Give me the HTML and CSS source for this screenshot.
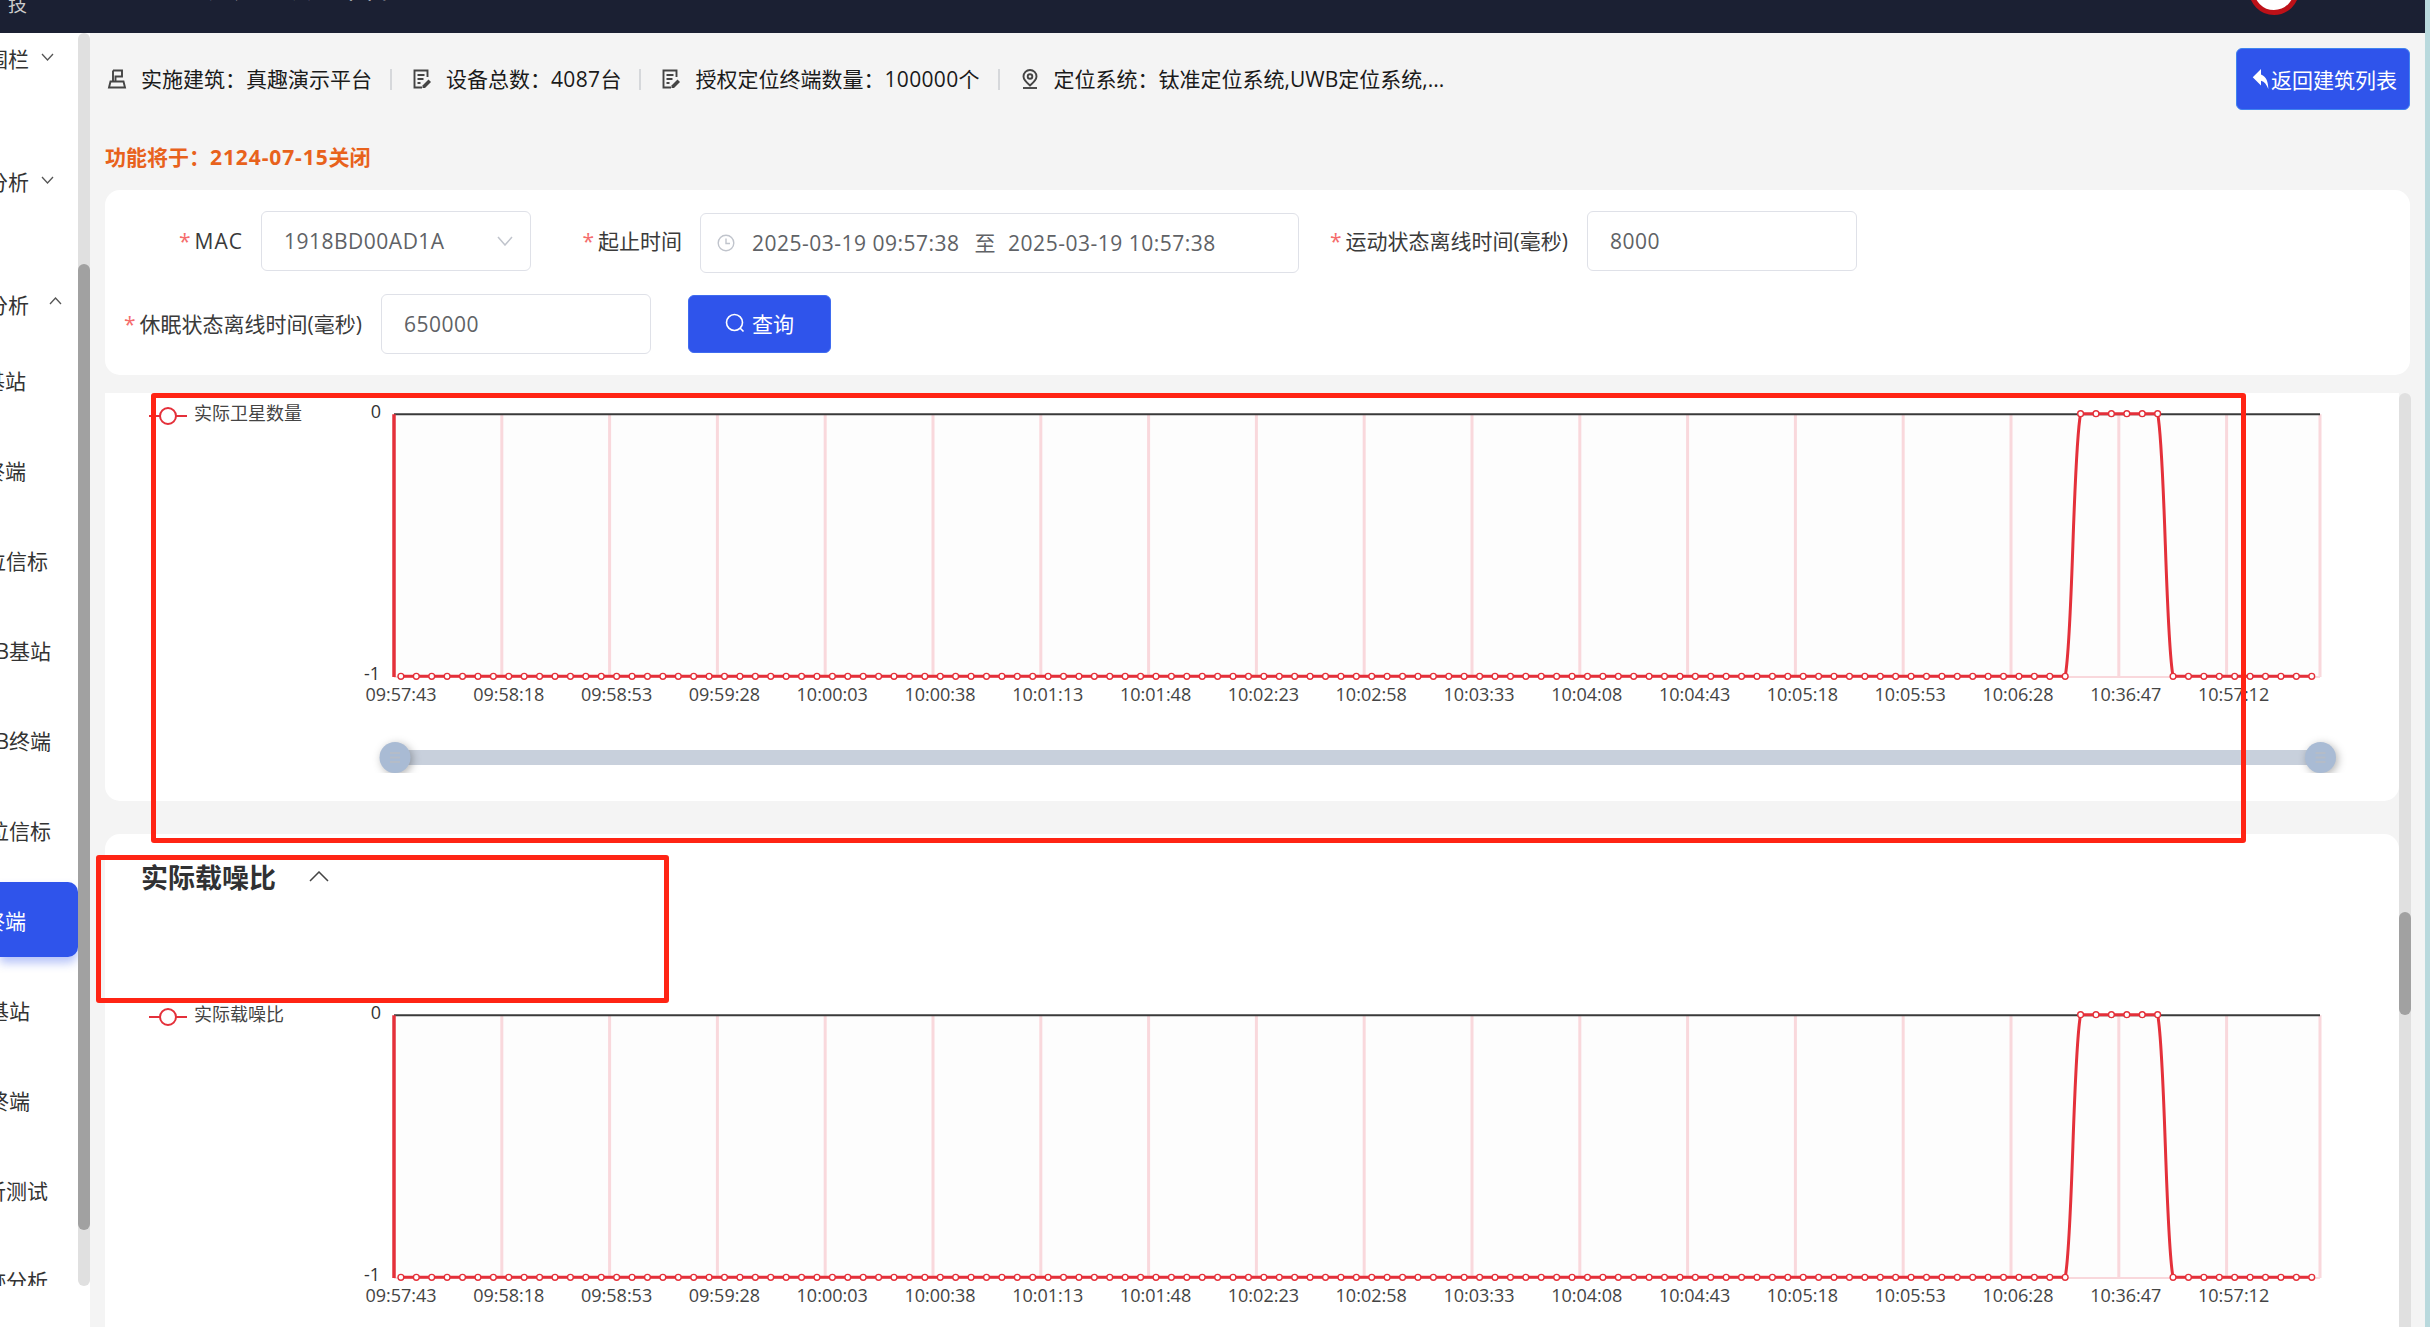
FILE: index.html
```html
<!DOCTYPE html>
<html lang="zh-CN">
<head>
    <meta charset="UTF-8">
    <meta name="viewport" content="width=device-width, initial-scale=1.0">
    <title>实际卫星数量</title>
    <link rel="stylesheet" href="styles.css">
</head>
<body>
    <div class="app">
        <header class="topbar">
            <div class="logo-text">技</div>
            <div class="sys-name">真趣</div>
            <div class="sys-title">位置服务定位演示平台</div>
            <div class="user-name">您好，管理员</div>
            <div class="avatar"></div>
        </header>

        <div class="layout">
            <aside class="sidebar">
                <div class="menu">
                    <div class="menu-scroll">
                        <div class="menu-group">
                            <span>电子围栏</span>
                            <svg class="chev" viewBox="0 0 13 8"><path d="M1 1l5.5 6L12 1"/></svg>
                        </div>
                        <div class="menu-group">
                            <span>数据分析</span>
                            <svg class="chev" viewBox="0 0 13 8"><path d="M1 1l5.5 6L12 1"/></svg>
                        </div>
                        <div class="menu-group open">
                            <span>定位分析</span>
                            <svg class="chev" viewBox="0 0 13 8"><path d="M1 7l5.5-6L12 7"/></svg>
                        </div>
                        <div class="menu-item end-a">定位基站</div>
                        <div class="menu-item end-a">定位终端</div>
                        <div class="menu-item end-b">定位信标</div>
                        <div class="menu-item end-c">UWB基站</div>
                        <div class="menu-item end-c">UWB终端</div>
                        <div class="menu-item end-c">定位信标</div>
                        <div class="menu-item end-a active">定位终端</div>
                        <div class="menu-item end-d">定位基站</div>
                        <div class="menu-item end-d">定位终端</div>
                        <div class="menu-item end-b">分析测试</div>
                        <div class="menu-item end-b">轨迹分析</div>
                    </div>
                </div>
                <div class="side-track"><div class="side-thumb"></div></div>
            </aside>

            <main class="main">
                <div class="info-bar">
                    <div class="info-list">
                        <div class="info-item">
                            <svg class="info-icon" viewBox="0 0 20 20"><path d="M6 1.5h9v6H8.5V12M6 1.5V12M3.5 12.5h13l1.5 6H2z"/></svg>
                            <span>实施建筑：真趣演示平台</span>
                        </div>
                        <div class="info-item">
                            <svg class="info-icon" viewBox="0 0 20 20"><use href="#icon-doc"/></svg>
                            <span>设备总数：<span class="num">4087</span>台</span>
                        </div>
                        <div class="info-item">
                            <svg class="info-icon" viewBox="0 0 20 20"><use href="#icon-doc"/></svg>
                            <span>授权定位终端数量：<span class="num">100000</span>个</span>
                        </div>
                        <div class="info-item">
                            <svg class="info-icon" viewBox="0 0 20 20"><path d="M10 1a6.5 6.5 0 0 0-6.500 6.500C3.500 11 10 16.500 10 16.500S16.500 11 16.500 7.500A6.500 6.500 0 0 0 10 1z"/><circle cx="10" cy="7.500" r="2.300"/><path d="M3 19h14"/></svg>
                            <span>定位系统：钛准定位系统,UWB定位系统,...</span>
                        </div>
                    </div>
                    <button class="back-btn">
                        <svg class="back-icon" viewBox="0 0 18 24"><path d="M0 10L9 1v6c6 2 8 9 8 16-2-5-4-8-8-9v5z"/></svg>返回建筑列表
                    </button>
                </div>

                <div class="notice">功能将于：<span class="notice-date">2124-07-15</span>关闭</div>

                <div class="search-card">
                    <div class="form-row">
                        <label class="form-label label-mac"><i>*</i><span class="mac-text">MAC</span></label>
                        <div class="field field-select">
                            <span>1918BD00AD1A</span>
                            <svg class="select-arrow" viewBox="0 0 16 10"><path d="M1 1l7 8 7-8"/></svg>
                        </div>
                        <label class="form-label label-time"><i>*</i>起止时间</label>
                        <div class="field field-date">
                            <svg class="clock" viewBox="0 0 18 18"><circle cx="9" cy="9" r="7.800"/><path d="M9 4.500V9.500h4"/></svg>
                            <span class="date-val">2025-03-19 09:57:38</span>
                            <span class="date-sep">至</span>
                            <span>2025-03-19 10:57:38</span>
                        </div>
                        <label class="form-label label-run"><i>*</i>运动状态离线时间(毫秒)</label>
                        <div class="field">8000</div>
                    </div>
                    <div class="form-row second">
                        <label class="form-label label-sleep"><i>*</i>休眠状态离线时间(毫秒)</label>
                        <div class="field">650000</div>
                        <button class="query-btn">
                            <svg class="query-icon" viewBox="0 0 20 20"><circle cx="9.500" cy="9.500" r="8"/><path d="M15 15l3.500 3.500"/></svg>查询
                        </button>
                    </div>
                </div>

                <div class="chart-area">
                    <div class="charts">
                        <section class="chart-card first">
                            <svg class="chart" id="chartSat" width="2294" height="408"></svg>
                        </section>
                        <section class="chart-card second">
                            <div class="card-head">
                                <h3>实际载噪比</h3>
                                <svg class="head-chev" viewBox="0 0 20 11"><path d="M1 10l9-9 9 9"/></svg>
                            </div>
                            <svg class="chart" id="chartCnr" width="2294" height="340"></svg>
                        </section>
                    </div>
                    <div class="main-track"><div class="main-thumb"></div></div>
                </div>
            </main>
        </div>

        <!-- red marks drawn over the screenshot -->
        <div class="mark mark-chart"></div>
        <div class="mark mark-title"></div>
    </div>

    <svg width="0" height="0" class="defs">
        <symbol id="icon-doc" viewBox="0 0 20 20">
            <path d="M15.500 8V1.500H2.500v17h7.500M5.500 6h7M5.500 10h6M5.500 14h3"/>
            <path class="solid" d="M16.500 10.500l2.500 2.500-6 6h-2.500v-2.500z"/>
        </symbol>
    </svg>

    <script>
        const times = ['09:57:43', '09:58:18', '09:58:53', '09:59:28', '10:00:03', '10:00:38', '10:01:13', '10:01:48', '10:02:23',
            '10:02:58', '10:03:33', '10:04:08', '10:04:43', '10:05:18', '10:05:53', '10:06:28', '10:36:47', '10:57:12'];

        const left = 289, right = 2215, top0 = 21.3, bottom = 284;
        const step = 107.8, pointStep = 15.41, pointCount = 125;
        const hiY = 20.7, loY = 283.3;

        function pointX(i) { return 295.9 + pointStep * i; }
        function isHigh(i) { return i >= 109 && i <= 114; }

        function buildLine() {
            let d = `M${pointX(0)} ${loY}`;
            for (let i = 1; i < pointCount; i++) {
                const x0 = pointX(i - 1), x1 = pointX(i);
                const y0 = isHigh(i - 1) ? hiY : loY, y1 = isHigh(i) ? hiY : loY;
                if (y0 === y1) {
                    d += `L${x1} ${y1}`;
                } else {
                    const dx = x1 - x0, dy = y1 - y0;
                    d += `C${x0 + dx * 0.5} ${y0 + dy * 0.15} ${x0 + dx * 0.5} ${y0 + dy * 0.85} ${x1} ${y1}`;
                }
            }
            return d;
        }

        function handle(cx) {
            return `<g class="zoom-handle"><circle cx="${cx}" cy="364.500" r="15.500"/></g>
                <path class="zoom-grip" d="M${cx - 5} 360h10M${cx - 5} 364.500h10M${cx - 5} 369h10"/>`;
        }

        function buildChart(id, legend, withZoom) {
            let html = `<rect class="plot-bg" x="${left}" y="${top0}" width="${right - left}" height="${bottom - top0}"/>`;

            // grid lines
            for (let k = 1; k <= 17; k++) {
                const x = left + step * k;
                html += `<line class="grid" x1="${x}" x2="${x}" y1="${top0}" y2="${bottom}"/>`;
            }
            html += `<line class="grid" x1="${right}" x2="${right}" y1="${top0}" y2="${bottom}"/>`;
            html += `<line class="grid thin" x1="${left}" x2="${right}" y1="${bottom}" y2="${bottom}"/>`;
            html += `<line class="axis-top" x1="${left}" x2="${right}" y1="${top0}" y2="${top0}"/>`;
            html += `<line class="series-edge" x1="${left}" x2="${left}" y1="${top0}" y2="${bottom}"/>`;

            html += `<text class="y-label" x="276" y="18">0</text>`;
            html += `<text class="y-label" x="275" y="280">-1</text>`;

            times.forEach((t, k) => {
                html += `<text class="x-label" x="${296 + step * k}" y="300.500">${t}</text>`;
            });

            html += `<path class="series" d="${buildLine()}"/>`;
            for (let i = 0; i < pointCount; i++) {
                html += `<circle class="dot" cx="${pointX(i)}" cy="${isHigh(i) ? hiY : loY}" r="2.900"/>`;
            }

            // legend
            html += `<line class="legend-line" x1="44" x2="82" y1="23" y2="23"/>`;
            html += `<circle class="legend-dot" cx="63" cy="23" r="8"/>`;
            html += `<text class="legend-text" x="89" y="20">${legend}</text>`;

            if (withZoom) {
                html += `<clipPath id="zoomClip"><rect x="250" y="340" width="2010" height="40"/></clipPath>`;
                html += `<g clip-path="url(#zoomClip)"><rect class="zoom-track" x="${left}" y="357" width="${right - left}" height="15"/>`;
                html += handle(290) + handle(2215.5) + `</g>`;
            }

            document.getElementById(id).innerHTML = html;
        }

        buildChart('chartSat', '实际卫星数量', true);
        buildChart('chartCnr', '实际载噪比', false);
    </script>
</body>
</html>
```

FILE: styles.css
```css
* {
    margin: 0;
    padding: 0;
    box-sizing: border-box;
}

body {
    width: 2430px;
    height: 1327px;
    overflow: hidden;
    background: #b9d9dd;
    font-family: "Open Sans", "Noto Sans CJK SC", sans-serif;
    font-size: 21px;
    color: #222;
}

.app {
    position: relative;
    width: 2425px;
    height: 1327px;
    overflow: hidden;
}

.defs {
    position: absolute;
}

.num {
    letter-spacing: 0.35px;
}

/* top bar, cut off by the screenshot */
.topbar {
    height: 33px;
    background: #1b2033;
    color: #fff;
    display: flex;
    align-items: flex-start;
    overflow: hidden;
}

.logo-text {
    width: 57px;
    padding-left: 8px;
    margin-top: -7px;
    font-size: 19px;
    line-height: 24px;
    color: #ccc;
}

.sys-name {
    width: 73px;
    margin-top: -27px;
    font-size: 18px;
    line-height: 30px;
}

.sys-title {
    margin-top: -27px;
    width: 240px;
    font-size: 26px;
    line-height: 30px;
    white-space: nowrap;
}

.user-name {
    margin-left: auto;
    margin-top: -27px;
    font-size: 21px;
    line-height: 30px;
    white-space: nowrap;
}

.avatar {
    width: 50px;
    height: 50px;
    margin: -35px 126px 0 219px;
    flex-shrink: 0;
    border-radius: 50%;
    background: #fff;
    border: 5px solid #bd1118;
}

.layout {
    display: flex;
    height: 1294px;
}

/* sidebar */
.sidebar {
    width: 90px;
    flex-shrink: 0;
    background: #fff;
    display: flex;
    align-items: flex-start;
}

.menu {
    width: 78px;
    flex-shrink: 0;
}

.menu-scroll {
    height: 1253px;
    overflow: hidden;
    color: #333;
}

.menu-group {
    height: 62px;
    margin-bottom: 61px;
    display: flex;
    align-items: center;
    justify-content: flex-end;
    white-space: nowrap;
    margin-top: -6px;
    position: relative;
    padding-right: 49px;
}

.menu-group + .menu-group {
    margin-top: 0;
}

.menu-group.open {
    margin-bottom: 0;
}

.chev {
    position: absolute;
    left: 41px;
    top: 26px;
    width: 13px;
    height: 8px;
    fill: none;
    stroke: #555;
    stroke-width: 1.300;
}

.open .chev {
    left: 49px;
    top: 24px;
}

.menu-item {
    height: 90px;
    display: flex;
    align-items: center;
    justify-content: flex-end;
    white-space: nowrap;
    position: relative;
}

.end-a { padding-right: 52px; }
.end-b { padding-right: 30px; }
.end-c { padding-right: 27px; }
.end-d { padding-right: 48px; }

.menu-item.active {
    height: 75px;
    margin: 7px 0 8px;
    background: #2f54eb;
    color: #fff;
    border-radius: 0 10px 10px 0;
    box-shadow: 0 6px 10px rgba(47, 84, 235, 0.35);
}

.side-track {
    width: 12px;
    height: 1253px;
    background: #e0e0e0;
    border-radius: 6px;
}

.side-thumb {
    margin-top: 231px;
    height: 966px;
    background: #a1a1a1;
    border-radius: 6px;
}

/* main */
.main {
    flex: 1;
    min-width: 0;
    background: #f4f4f4;
    padding: 15px 15px 0;
    overflow: hidden;
}

.info-bar {
    display: flex;
    justify-content: space-between;
    align-items: center;
    height: 62px;
}

.info-list {
    display: flex;
    align-items: center;
    padding-left: 2px;
    color: #1a1a1a;
}

.info-item {
    display: flex;
    align-items: center;
    white-space: nowrap;
    line-height: 30px;
}

.info-item + .info-item::before {
    content: '';
    width: 2px;
    height: 21px;
    background: #d6d8db;
    margin: 0 20px 0 18px;
}

.info-icon {
    width: 20px;
    height: 20px;
    margin-right: 14px;
    fill: none;
    stroke: #444;
    stroke-width: 1.900;
}

.solid {
    fill: #444;
    stroke: none;
}

.back-btn {
    width: 174px;
    height: 62px;
    background: #2f54eb;
    border: 1px solid #3f83f0;
    border-radius: 6px;
    color: #fff;
    font: inherit;
    display: flex;
    align-items: center;
    padding-left: 15px;
    white-space: nowrap;
}

.back-icon {
    width: 18px;
    height: 22px;
    fill: #fff;
    margin-right: 1px;
}

.notice {
    margin-top: 32px;
    line-height: 30px;
    font-weight: bold;
    color: #e8621c;
}

.notice-date {
    letter-spacing: 0.9px;
}

.search-card {
    margin-top: 18px;
    height: 185px;
    padding-top: 21px;
    background: #fff;
    border-radius: 15px;
}

.form-row {
    display: flex;
    align-items: flex-start;
}

.form-row.second {
    margin-top: 21px;
}

.form-label {
    height: 60px;
    line-height: 60px;
    text-align: right;
    padding-right: 18px;
    white-space: nowrap;
    color: #3a3a3a;
}

.form-label i {
    font-style: normal;
    color: #f56c6c;
    margin-right: 4px;
}

.mac-text {
    letter-spacing: 1px;
}

.label-mac { width: 156px; }
.label-time { width: 169px; }
.label-run { width: 288px; padding-right: 19px; }
.label-sleep { width: 276px; padding-right: 19px; }

.field {
    width: 270px;
    height: 60px;
    line-height: 58px;
    padding: 0 22px;
    border: 1.500px solid #dfe1e8;
    border-radius: 6px;
    color: #606266;
    display: flex;
    align-items: center;
    white-space: nowrap;
    letter-spacing: 0.5px;
}

.field-select {
    justify-content: space-between;
    padding-right: 17px;
}

.select-arrow {
    width: 16px;
    height: 10px;
    fill: none;
    stroke: #c0c4cc;
    stroke-width: 1.500;
}

.field-date {
    width: 599px;
    margin-top: 2px;
    padding-left: 16px;
}

.clock {
    width: 18px;
    height: 18px;
    margin-right: 17px;
    fill: none;
    stroke: #c0c4cc;
    stroke-width: 1.400;
}

.date-sep {
    margin: 0 12px 0 15px;
}

.query-btn {
    width: 143px;
    height: 58px;
    margin: 1px 0 0 37px;
    padding: 0 0 2px 36px;
    background: #2f54eb;
    border: 1px solid #3f6cf0;
    border-radius: 6px;
    color: #fff;
    font: inherit;
    display: flex;
    align-items: center;
}

.query-icon {
    width: 20px;
    height: 20px;
    margin-right: 7px;
    fill: none;
    stroke: #fff;
    stroke-width: 1.600;
}

/* charts */
.chart-area {
    display: flex;
    margin: 18px -1px 0 0;
}

.charts {
    width: 2294px;
    flex-shrink: 0;
}

.chart-card {
    background: #fff;
}

.chart-card.first {
    height: 408px;
    border-radius: 0 0 15px 15px;
}

.chart-card.second {
    height: 520px;
    margin-top: 33px;
    border-radius: 15px 15px 0 0;
}

.card-head {
    height: 160px;
    padding: 24px 0 0 36px;
    display: flex;
    align-items: flex-start;
}

.card-head h3 {
    font-size: 27px;
    line-height: 40px;
    color: #303133;
}

.head-chev {
    width: 20px;
    height: 11px;
    margin: 13px 0 0 33px;
    fill: none;
    stroke: #444;
    stroke-width: 1.500;
}

.chart {
    display: block;
}

.plot-bg { fill: #fdfdfd; }
.grid { stroke: #f9d8dc; stroke-width: 3; }
.grid.thin { stroke-width: 2; }
.axis-top { stroke: #3a3a3a; stroke-width: 2; }
.series-edge { stroke: #e4303a; stroke-width: 3.500; }
.series { fill: none; stroke: #e4303a; stroke-width: 3; }
.dot { fill: #fff; stroke: #e4303a; stroke-width: 1.400; }

.y-label,
.x-label,
.legend-text {
    font-size: 18px;
    dominant-baseline: central;
    fill: #444;
}

.y-label {
    text-anchor: end;
    fill: #333;
}

.x-label {
    text-anchor: middle;
}

.legend-line { stroke: #e4303a; stroke-width: 2; }
.legend-dot { fill: #fff; stroke: #e4303a; stroke-width: 2; }

.zoom-track { fill: #c8d0dc; }
.zoom-handle { fill: #a9bbd4; filter: drop-shadow(2px 2px 4px rgba(0, 0, 0, 0.3)); }
.zoom-grip { fill: none; stroke: #b4bcc8; stroke-width: 2; }

.main-track {
    width: 12px;
    height: 960px;
    flex-shrink: 0;
    background: #e0e0e0;
    border-radius: 6px 6px 0 0;
}

.main-thumb {
    margin-top: 519px;
    height: 103px;
    background: #a1a1a1;
    border-radius: 6px;
}

/* annotation boxes */
.mark {
    position: absolute;
    border: 5px solid #ff2414;
    border-radius: 3px;
}

.mark-chart {
    left: 151px;
    top: 393px;
    width: 2095px;
    height: 450px;
}

.mark-title {
    left: 96px;
    top: 855px;
    width: 573px;
    height: 148px;
}
```
